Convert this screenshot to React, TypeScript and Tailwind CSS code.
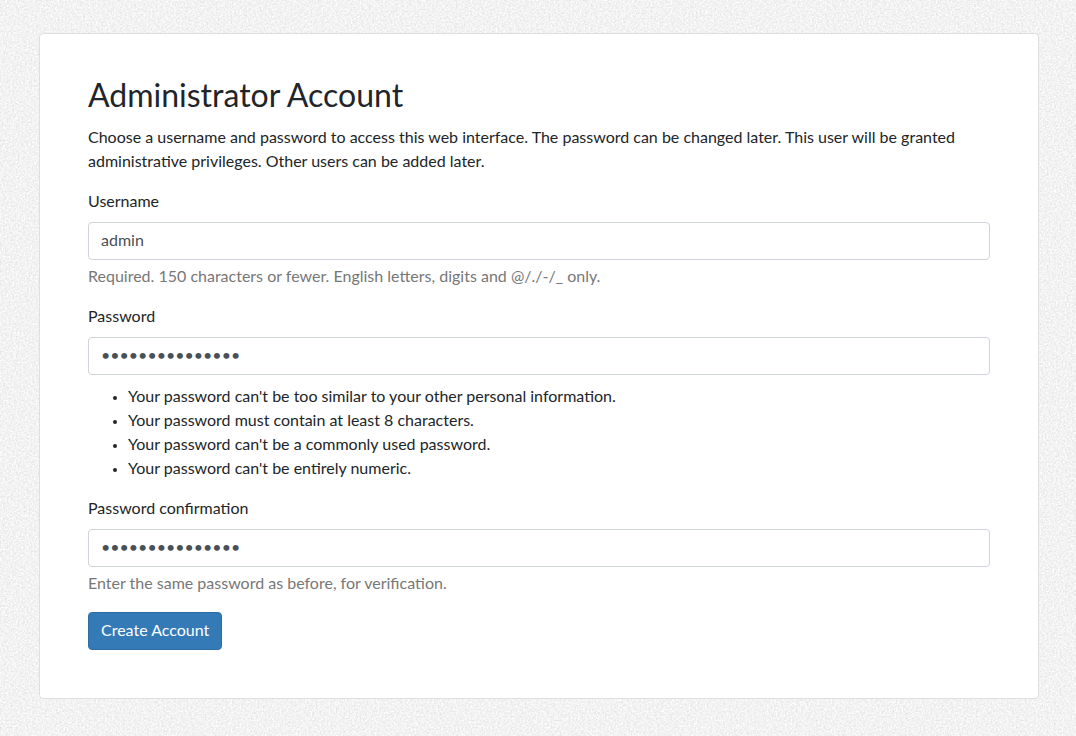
import React from "react";

const inputClass =
  "block h-[38px] w-full rounded border border-[#ced4da] bg-white px-3 pt-1 pb-2 text-base text-[#495057] outline-none focus:border-[#80bdff]";

function Grain() {
  return (
    <svg aria-hidden="true" className="absolute inset-0 -z-10 h-full w-full">
      <filter id="grain" x="0" y="0" width="100%" height="100%" colorInterpolationFilters="sRGB">
        <feTurbulence type="fractalNoise" baseFrequency="0.55" numOctaves="4" seed="4" />
        <feColorMatrix type="matrix" values="0.17 0 0 0 0.865  0.17 0 0 0 0.865  0.17 0 0 0 0.865  0 0 0 0 1" />
      </filter>
      <rect width="100%" height="100%" filter="url(#grain)" />
    </svg>
  );
}

type FieldProps = {
  id: string;
  label: string;
  type: string;
  value: string;
  children: React.ReactNode;
};

function Field({ id, label, type, value, children }: FieldProps) {
  return (
    <div className="mb-4">
      <label htmlFor={id} className="mb-[9px] block">
        {label}
      </label>
      <input id={id} name={id} type={type} defaultValue={value} className={inputClass} />
      {children}
    </div>
  );
}

const rules = [
  "Your password can't be too similar to your other personal information.",
  "Your password must contain at least 8 characters.",
  "Your password can't be a commonly used password.",
  "Your password can't be entirely numeric.",
];

export default function App() {
  return (
    <div className="relative isolate min-h-screen bg-[#f1f1f1] pt-[33px] pr-[37px] pb-[37px] pl-[39px] font-['Lato',sans-serif] text-base text-[#212529]">
      <Grain />
      <main className="mx-auto max-w-[1000px] rounded border border-[#dfdfdf] bg-white px-12 pt-10 pb-12">
        <h1 className="mb-[9px] text-[32px] leading-[42px]">Administrator Account</h1>
        <form onSubmit={(e) => e.preventDefault()}>
          <p className="mb-4">
            Choose a username and password to access this web interface. The password can be changed later. This user
            will be granted administrative privileges. Other users can be added later.
          </p>
          <Field id="username" label="Username" type="text" value="admin">
            <p className="mt-1 text-[#777777]">
              Required. 150 characters or fewer. English letters, digits and @/./-/_ only.
            </p>
          </Field>
          <Field id="password" label="Password" type="password" value="fifteen-letters">
            <ul className="mt-[9px] list-disc pl-10 marker:text-xs">
              {rules.map((rule) => (
                <li key={rule}>{rule}</li>
              ))}
            </ul>
          </Field>
          <Field id="confirmation" label="Password confirmation" type="password" value="fifteen-letters">
            <p className="mt-1 text-[#777777]">Enter the same password as before, for verification.</p>
          </Field>
          <button
            type="submit"
            className="mt-[17px] block h-[38px] rounded border border-[#2e6da4] bg-[#337ab7] px-3 pb-0.5 text-white"
          >
            Create Account
          </button>
        </form>
      </main>
    </div>
  );
}
